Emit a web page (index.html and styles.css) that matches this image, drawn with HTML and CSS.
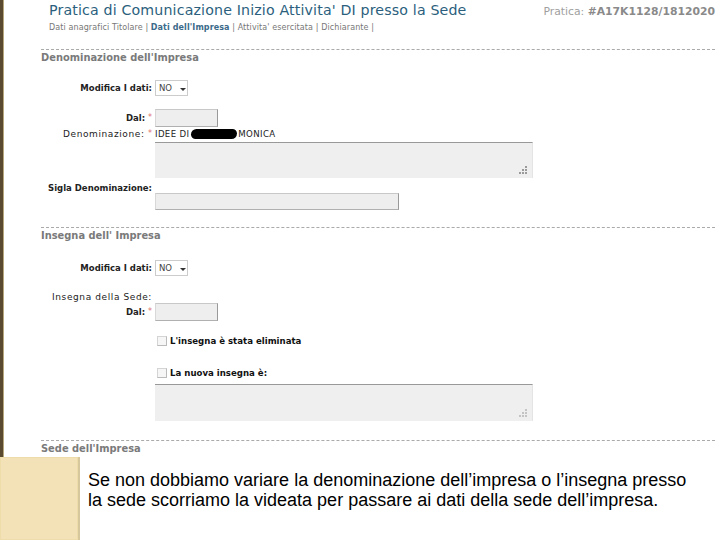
FILE: index.html
```html
<!DOCTYPE html>
<html lang="it">
<head>
<meta charset="utf-8">
<title>Pratica di Comunicazione</title>
<link rel="stylesheet" href="styles.css">
</head>
<body>
<div class="page">
  <div class="screen">
    <header class="top">
      <h1 class="title">Pratica di Comunicazione Inizio Attivita' DI presso la Sede</h1>
      <div class="pratica">Pratica: <b>#A17K1128/1812020</b></div>
    </header>
    <nav class="tabs">Dati anagrafici Titolare | <b>Dati dell'Impresa</b> | Attivita' esercitata | Dichiarante |</nav>

    <section class="sec sec-den">
      <h2 class="sec-title">Denominazione dell'Impresa</h2>
      <div class="row r-mod">
        <span class="lbl b">Modifica I dati:</span>
        <span class="select">NO<i class="caret"></i></span>
      </div>
      <div class="row r-dal">
        <span class="lbl b">Dal: <em class="req">*</em></span>
        <span class="input small"></span>
      </div>
      <div class="row r-den">
        <span class="lbl">Denominazione: <em class="req">*</em></span>
        <span class="value">IDEE DI <span class="redact"></span>MONICA</span>
      </div>
      <div class="row r-ta">
        <span class="lbl"></span>
        <span class="textarea"><svg class="grip" width="9" height="9" viewBox="0 0 9 9"><rect x="6" y="0" width="2" height="2"/><rect x="6" y="3" width="2" height="2"/><rect x="3" y="3" width="2" height="2"/><rect x="6" y="6" width="2" height="2"/><rect x="3" y="6" width="2" height="2"/><rect x="0" y="6" width="2" height="2"/></svg></span>
      </div>
      <div class="row r-sigla">
        <span class="lbl b">Sigla Denominazione:</span>
      </div>
      <div class="row r-sigla-in">
        <span class="lbl"></span>
        <span class="input wide"></span>
      </div>
    </section>

    <section class="sec sec-ins">
      <h2 class="sec-title">Insegna dell' Impresa</h2>
      <div class="row r-mod">
        <span class="lbl b">Modifica I dati:</span>
        <span class="select">NO<i class="caret"></i></span>
      </div>
      <div class="row r-insede">
        <span class="lbl">Insegna della Sede:</span>
      </div>
      <div class="row r-dal2">
        <span class="lbl b">Dal: <em class="req">*</em></span>
        <span class="input small"></span>
      </div>
      <div class="row r-chk1">
        <span class="lbl"></span>
        <span class="check"><span class="box"></span><b>L'insegna è stata eliminata</b></span>
      </div>
      <div class="row r-chk2">
        <span class="lbl"></span>
        <span class="check"><span class="box"></span><b>La nuova insegna è:</b></span>
      </div>
      <div class="row r-ta2">
        <span class="lbl"></span>
        <span class="textarea"><svg class="grip light" width="9" height="9" viewBox="0 0 9 9"><rect x="6" y="0" width="2" height="2"/><rect x="6" y="3" width="2" height="2"/><rect x="3" y="3" width="2" height="2"/><rect x="6" y="6" width="2" height="2"/><rect x="3" y="6" width="2" height="2"/><rect x="0" y="6" width="2" height="2"/></svg></span>
      </div>
    </section>

    <section class="sec sec-sede">
      <h2 class="sec-title">Sede dell'Impresa</h2>
    </section>
  </div>

  <div class="caption">
    <div class="swatch"></div>
    <p class="note">Se non dobbiamo variare la denominazione dell’impresa o l’insegna presso la sede scorriamo la videata per passare ai dati della sede dell’impresa.</p>
  </div>
</div>
</body>
</html>
```

FILE: styles.css
```css
* { box-sizing: border-box; }
html, body { margin: 0; padding: 0; background: #fff; }
body { font-family: "DejaVu Sans", Verdana, sans-serif; color: #222; }

.page {
  width: 720px;
  height: 540px;
  display: flex;
  flex-direction: column;
  overflow: hidden;
}

.screen {
  height: 457px;
  flex: none;
  overflow: hidden;
  border-left: 3px solid #5a4a30;
  box-shadow: inset 1px 0 0 #b8a880;
}

.top {
  display: flex;
  justify-content: space-between;
  align-items: baseline;
  padding: 1px 5px 0 46px;
}
.title {
  margin: 0;
  font-weight: normal;
  font-size: 14.2px;
  line-height: 18px;
  color: #2b5f7d;
  letter-spacing: 0.15px;
}
.pratica {
  font-size: 10.8px;
  color: #a0a0a0;
}
.pratica b { color: #8a8a8a; }

.tabs {
  margin: 3px 0 0 46px;
  font-size: 8px;
  line-height: 12px;
  color: #777;
  letter-spacing: 0.1px;
}
.tabs b { color: #3b6a8a; }

.sec {
  margin-left: 38px;
  margin-right: 5px;
  border-top: 1px dashed #aaa;
}
.sec-den { margin-top: 15px; }
.sec-title {
  margin: 1px 0 0 0;
  font-size: 9.9px;
  line-height: 14px;
  color: #7a7a7a;
  font-weight: bold;
}

.row {
  display: flex;
  align-items: center;
  gap: 3px;
  margin-left: 3px;
}
.lbl {
  flex: none;
  width: 108px;
  text-align: right;
  font-size: 9px;
  line-height: 12px;
  letter-spacing: 0.6px;
  color: #222;
  white-space: nowrap;
}
.lbl.b { font-weight: bold; font-size: 8.5px; letter-spacing: 0; }
.req { font-style: normal; color: #e07070; font-size: 8px; font-weight: normal; vertical-align: top; letter-spacing: 0; }

.select {
  width: 33px;
  height: 16px;
  border: 1px solid #ccc;
  background: #fff;
  font-size: 8.5px;
  color: #444;
  display: flex;
  align-items: center;
  padding-left: 3px;
  gap: 8px;
}
.caret {
  width: 0; height: 0;
  border-left: 3px solid transparent;
  border-right: 3px solid transparent;
  border-top: 3px solid #333;
  margin-top: 2px;
}

.input {
  height: 18px;
  background: #eeeeee;
  border: 1px solid #d8d8d8;
  border-right-color: #999;
  border-bottom-color: #b0b0b0;
  border-top-color: #c8c8c8;
}
.input.small { width: 63px; }
.input.wide { width: 244px; height: 17px; }

.value {
  font-size: 8.6px;
  letter-spacing: 0.35px;
  color: #222;
  display: flex;
  align-items: center;
}
.redact {
  display: inline-block;
  width: 46px;
  height: 10px;
  margin: 0 1px 0 2px;
  background: #000;
  border-radius: 6px 5px 6px 5px;
}

.textarea {
  width: 378px;
  height: 36px;
  background: #efefef;
  border-top: 1px solid #999;
  border-right: 1px solid #e4e4e4;
  display: flex;
  justify-content: flex-end;
  align-items: flex-end;
  padding: 0 4px 3px 0;
}
.grip { fill: #9a9a9a; }
.grip.light { fill: #c4c4c4; }

.check {
  display: flex;
  align-items: center;
  gap: 3px;
  font-size: 8.6px;
  line-height: 12px;
  color: #111;
  padding-left: 2px;
}
.box {
  width: 10px;
  height: 10px;
  border: 1px solid #d4d4d4;
  border-right-color: #bbb;
  border-bottom-color: #bbb;
  background: #f6f6f6;
}

.sec-den .r-mod { margin-top: 15px; }
.sec-den .r-dal { margin-top: 13px; }
.r-den { margin-top: 0; height: 14px; }
.r-ta { margin-top: 1px; }
.r-sigla { margin-top: 4px; }
.r-sigla-in { margin-top: -1px; }

.sec-ins { margin-top: 17px; }
.sec-ins .r-mod { margin-top: 17px; }
.r-insede { margin-top: 15px; }
.r-dal2 { margin-top: 0; }
.r-chk1 { margin-top: 14px; }
.r-chk2 { margin-top: 20px; }
.r-ta2 { margin-top: 5px; }
.r-ta2 .textarea { height: 37px; }

.sec-sede { margin-top: 19px; }

.caption {
  flex: 1;
  display: flex;
  background: #fff;
}
.swatch {
  width: 80px;
  flex: none;
  background: #f3e2b8;
  border-right: 2px solid #d7c79c;
  box-shadow: inset 0 0 0 1px #efdcab;
}
.note {
  margin: 13px 0 0 8px;
  width: 612px;
  font-family: "Liberation Sans", Arial, sans-serif;
  font-size: 18px;
  line-height: 20px;
  color: #000;
}
```
